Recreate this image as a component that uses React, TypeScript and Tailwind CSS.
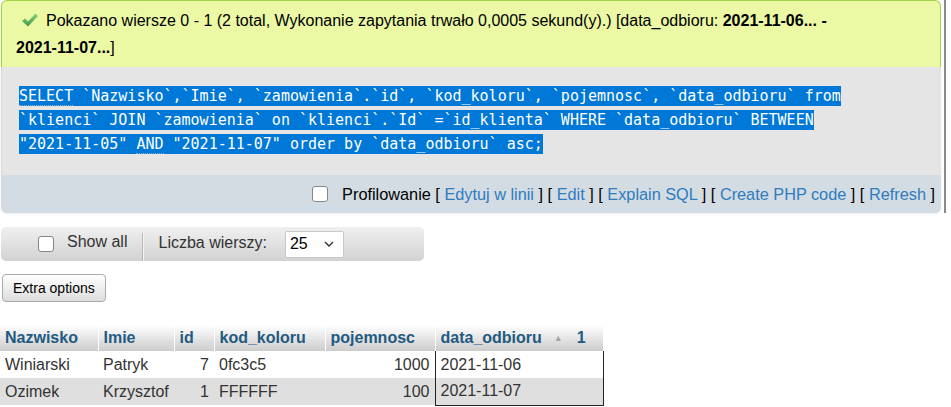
import React from "react";

function CheckIcon() {
  return (
    <svg width="18" height="16" viewBox="0 0 18 16" className="inline-block align-[-2px] ml-[5px] mr-[7px]">
      <defs>
        <linearGradient id="chk" x1="0" y1="0" x2="0" y2="1">
          <stop offset="0" stopColor="#8fd07a" />
          <stop offset="1" stopColor="#3f9a45" />
        </linearGradient>
      </defs>
      <path d="M1 9 L4 6.5 L7 9.5 L14.5 1.5 L17 4 L7 14.5 Z" fill="url(#chk)" />
    </svg>
  );
}

function Box({ className = "" }: { className?: string }) {
  return <span className={`inline-block w-[16px] h-[16px] rounded-[3px] border border-[#858585] bg-white ${className}`} />;
}

const sqlLines = [
  ["SELECT", " `Nazwisko`,`Imie`, `zamowienia`.`id`, `kod_koloru`, `pojemnosc`, `data_odbioru` from"],
  ["", "`klienci` JOIN `zamowienia` on `klienci`.`Id` =`id_klienta` WHERE `data_odbioru` BETWEEN"],
];

const links = ["Edytuj w linii", "Edit", "Explain SQL", "Create PHP code", "Refresh"];

const rows = [
  { nazwisko: "Winiarski", imie: "Patryk", id: 7, kod: "0fc3c5", poj: 1000, data: "2021-11-06" },
  { nazwisko: "Ozimek", imie: "Krzysztof", id: 1, kod: "FFFFFF", poj: 100, data: "2021-11-07" },
];

export default function App() {
  const th = "h-[25px] px-[5px] text-left font-bold text-[#235a81] border-r border-white bg-[linear-gradient(#ffffff,#cccccc)]";
  return (
    <div className="bg-white min-h-screen text-[16px] font-['Liberation_Sans',Arial,sans-serif] text-black">
      <div className="w-[946px] pl-[1px] pr-[3px] border-r-2 border-[#8a8a8a]">
        <div className="rounded-t-[6px] border border-b-0 border-[#a2d246] bg-[#ebf8a4] pl-[14px] pt-[6px] pb-[6px] leading-[27px]">
          <CheckIcon />
          Pokazano wiersze 0 - 1 (2 total, Wykonanie zapytania trwało 0,0005 sekund(y).) [data_odbioru:{" "}
          <b>2021-11-06... -</b>
          <br />
          <b>2021-11-07...</b>]
        </div>
        <div className="rounded-b-[6px] bg-[#e5e5e5] border-l border-[#d8d8d8] shadow-[0_1px_2px_rgba(0,0,0,0.08)]">
          <div className="pl-[17px] pt-[17px] pb-[21px] h-[108px] font-['DejaVu_Sans_Mono',monospace] text-[15px] leading-[24px] whitespace-pre text-white">
            {sqlLines.map(([kw, rest], i) => (
              <div key={i}>
                <span className="bg-[#0078d7] py-[1px]">
                  {kw && <span className="border-b border-dotted border-[#9ab]">{kw}</span>}
                  {rest}
                </span>
              </div>
            ))}
            <div>
              <span className="bg-[#0078d7] py-[1px]">
                "2021-11-05" <span className="border-b border-dotted border-[#9ab]">AND</span> "2021-11-07" order by `data_odbioru` asc;
              </span>
            </div>
          </div>
          <div className="h-[38px] rounded-b-[6px] bg-[#d3dce3] flex items-center justify-end pr-[6px] text-[16.3px]">
            <Box className="mr-[14px]" />
            <span>Profilowanie</span>
            {links.map((l) => (
              <span key={l} className="whitespace-pre">
                {" [ "}
                <span className="text-[#2f7bbf]">{l}</span>
                {" ]"}
              </span>
            ))}
          </div>
        </div>
      </div>

      <div className="mt-[14px] ml-[1px] w-[423px] h-[34px] rounded-[5px] bg-[linear-gradient(#f0f0f0,#d2d2d2)] flex items-center text-[#333]">
        <Box className="ml-[37px]" />
        <span className="ml-[13px] -mt-[4px]">Show all</span>
        <span className="ml-[15px] w-[2px] h-[28px] mt-[6px] bg-[#b8b8b8] border-r border-[#f4f4f4]" />
        <span className="ml-[14px] -mt-[3px]">Liczba wierszy:</span>
        <span className="ml-[18px] w-[59px] h-[27px] bg-white border border-[#c8c8c8] rounded-[2px] flex items-center pl-[4px] text-black">
          <span className="flex-1">25</span>
          <svg width="10" height="6" viewBox="0 0 10 6" className="mr-[9px]">
            <path d="M1 1 L5 5 L9 1" fill="none" stroke="#333" strokeWidth="1.4" />
          </svg>
        </span>
      </div>

      <button className="mt-[13px] ml-[2px] h-[28px] px-[10px] text-[14px] rounded-[4px] border border-[#aaaaaa] bg-[linear-gradient(#ffffff,#dddddd)] text-black font-['Liberation_Sans',Arial,sans-serif]">
        Extra options
      </button>

      <table className="mt-[23px] border-collapse text-[#333]">
        <thead>
          <tr className="h-[26px]">
            <th className={`${th} w-[98px]`}>Nazwisko</th>
            <th className={`${th} w-[76px]`}>Imie</th>
            <th className={`${th} w-[40px]`}>id</th>
            <th className={`${th} w-[111px]`}>kod_koloru</th>
            <th className={`${th} w-[110px]`}>pojemnosc</th>
            <th className={`${th} w-[168px] border-r-0`}>
              data_odbioru
              <span className="ml-[12px] text-[9px] text-[#a8a8a8] align-[2px]">▲</span>
              <span className="ml-[14px]">1</span>
            </th>
          </tr>
        </thead>
        <tbody>
          {rows.map((r, i) => (
            <tr key={r.id} className={`h-[27px] ${i % 2 ? "bg-[#dfdfdf]" : "bg-white"}`}>
              <td className="px-[5px]">{r.nazwisko}</td>
              <td className="px-[5px]">{r.imie}</td>
              <td className="px-[5px] text-right">{r.id}</td>
              <td className="px-[5px]">{r.kod}</td>
              <td className="px-[5px] text-right">{r.poj}</td>
              <td className={`px-[5px] border-x border-[#222] ${i === rows.length - 1 ? "border-b" : ""}`}>{r.data}</td>
            </tr>
          ))}
        </tbody>
      </table>
    </div>
  );
}
